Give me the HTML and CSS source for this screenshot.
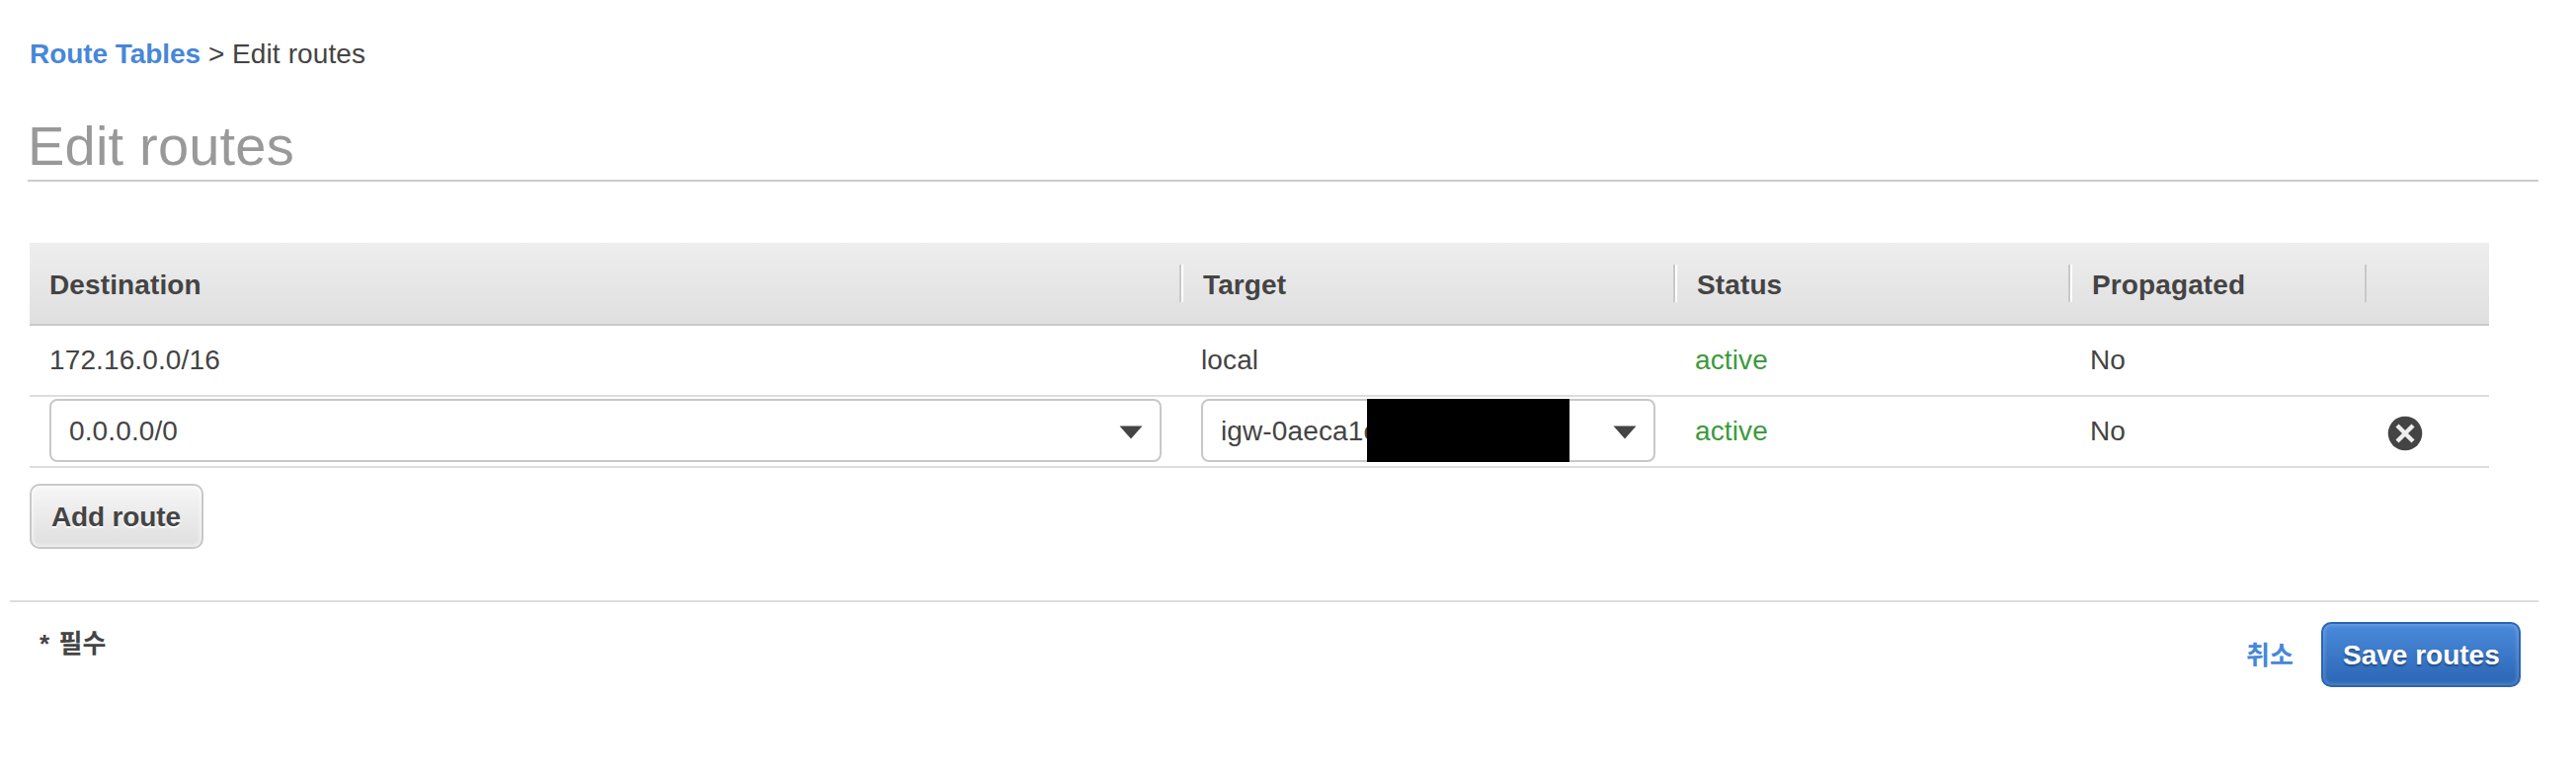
FILE: index.html
```html
<!DOCTYPE html>
<html lang="ko">
<head>
<meta charset="utf-8">
<title>Edit routes</title>
<link rel="stylesheet" href="styles.css">
</head>
<body>
<nav class="breadcrumb"><a class="crumb-link" href="#">Route Tables</a><span class="crumb-sep">&gt;</span><span class="crumb-current">Edit routes</span></nav>
<h1 class="title">Edit routes</h1>
<main class="routes">
  <div class="row head">
    <div class="cell h-dest">Destination</div>
    <div class="cell h-target">Target</div>
    <div class="cell h-status">Status</div>
    <div class="cell h-prop">Propagated</div>
    <div class="cell"></div>
  </div>
  <div class="row">
    <div class="cell">172.16.0.0/16</div>
    <div class="cell">local</div>
    <div class="cell active">active</div>
    <div class="cell">No</div>
    <div class="cell"></div>
  </div>
  <div class="row">
    <div class="cell field">
      <div class="select"><span class="value">0.0.0.0/0</span><svg class="arrow" viewBox="0 0 24 14"><path d="M.5.5h23L12 13.5z"/></svg></div>
    </div>
    <div class="cell field">
      <div class="select"><span class="value">igw-0aeca1c</span><span class="mask"></span><svg class="arrow" viewBox="0 0 24 14"><path d="M.5.5h23L12 13.5z"/></svg></div>
    </div>
    <div class="cell active">active</div>
    <div class="cell">No</div>
    <div class="cell remove">
      <svg class="remove-icon" viewBox="0 0 36 36"><circle cx="18" cy="18" r="17.3"/><path d="M10 10l16 16M26 10L10 26"/></svg>
    </div>
  </div>
</main>
<button class="btn add">Add route</button>
<footer class="footer">
  <div class="required">* 필수</div>
  <div class="actions"><a class="cancel" href="#">취소</a><button class="btn save">Save routes</button></div>
</footer>
</body>
</html>
```
FILE: styles.css
```css
* { box-sizing: border-box; }
body {
  margin: 0;
  height: 784px;
  background: #fff;
  color: #444;
  font: 28px/32px "Liberation Sans", "Noto Sans CJK KR", sans-serif;
  letter-spacing: .12px;
}
a { text-decoration: none; color: #4787d8; font-weight: bold; }
.breadcrumb { display: flex; padding: 39px 0 0 30px; height: 110px; }
.crumb-link { width: 181px; letter-spacing: -.05px; }
.crumb-sep { width: 24px; }
.title {
  margin: 0 38px 0 28px;
  height: 74px;
  border-bottom: 2px solid #ccc;
  color: #999;
  font-size: 56px;
  font-weight: normal;
  line-height: 76px;
  letter-spacing: .2px;
}
.routes { margin: 62px 88px 0 30px; }
.row {
  display: grid;
  grid-template-columns: 1166px 500px 400px 300px 124px;
  height: 72px;
  border-bottom: 2px solid #ddd;
}
.cell { padding: 19px 20px 0; white-space: nowrap; }
.head {
  height: 84px;
  border-bottom-color: #c8c8c8;
  background: linear-gradient(#eee, #dfdfdf);
  font-weight: bold;
}
.head .cell {
  padding-top: 27px;
  background: linear-gradient(#c8c8c8, #c8c8c8) right 0 top 22px / 2px 38px no-repeat;
}
.head .cell:nth-child(n+2):nth-child(-n+4) {
  padding-left: 22px;
  background:
    linear-gradient(#fff, #fff) left 0 top 22px / 2px 38px no-repeat,
    linear-gradient(#c8c8c8, #c8c8c8) right 0 top 22px / 2px 38px no-repeat;
}
.head .cell:last-child { background: none; }
.active { color: #3c9a3c; }
.cell.field { padding-top: 2px; }
.select {
  position: relative;
  display: flex;
  justify-content: space-between;
  height: 64px;
  padding: 15px 17px 0 18px;
  border: 2px solid #c8c8c8;
  border-radius: 8px;
}
.arrow { width: 24px; height: 14px; margin-top: 10px; fill: #444; }
.mask {
  position: absolute;
  top: -2px;
  left: 166px;
  width: 205px;
  height: 64px;
  background: #000;
}
.cell.remove { padding: 19px 0 0 21px; }
.remove-icon { display: block; width: 36px; height: 36px; fill: #444; }
.remove-icon path { stroke: #eee; stroke-width: 4.4; }
.btn {
  display: block;
  height: 66px;
  padding: 2px 0 0 20px;
  border: 2px solid #c8c8c8;
  border-radius: 10px;
  font: bold 28px/60px "Liberation Sans", sans-serif;
  text-align: left;
  white-space: nowrap;
}
.add {
  width: 176px;
  margin: 16px 0 0 30px;
  background: linear-gradient(#f6f6f6, #dfdfdf);
  box-shadow: inset 0 0 4px 1px rgba(255, 255, 255, .8);
  color: #444;
  letter-spacing: -.15px;
  text-shadow: 0 2px 0 #fff;
}
.footer {
  display: flex;
  justify-content: space-between;
  margin: 52px 38px 0 10px;
  border-top: 2px solid #ddd;
}
.required { padding: 26px 0 0 30px; font-size: 26px; font-weight: bold; word-spacing: 2px; }
.actions { display: flex; padding: 20px 18px 0 0; }
.cancel { width: 76px; padding-top: 18px; font-size: 26px; }
.save {
  width: 202px;
  border-color: #2a65b5;
  background: linear-gradient(#4a8adb, #2c66b5);
  box-shadow: inset 0 0 4px 1px rgba(255, 255, 255, .25);
  color: #fff;
  text-shadow: 0 2px 2px rgba(0, 0, 0, .35);
}
```
